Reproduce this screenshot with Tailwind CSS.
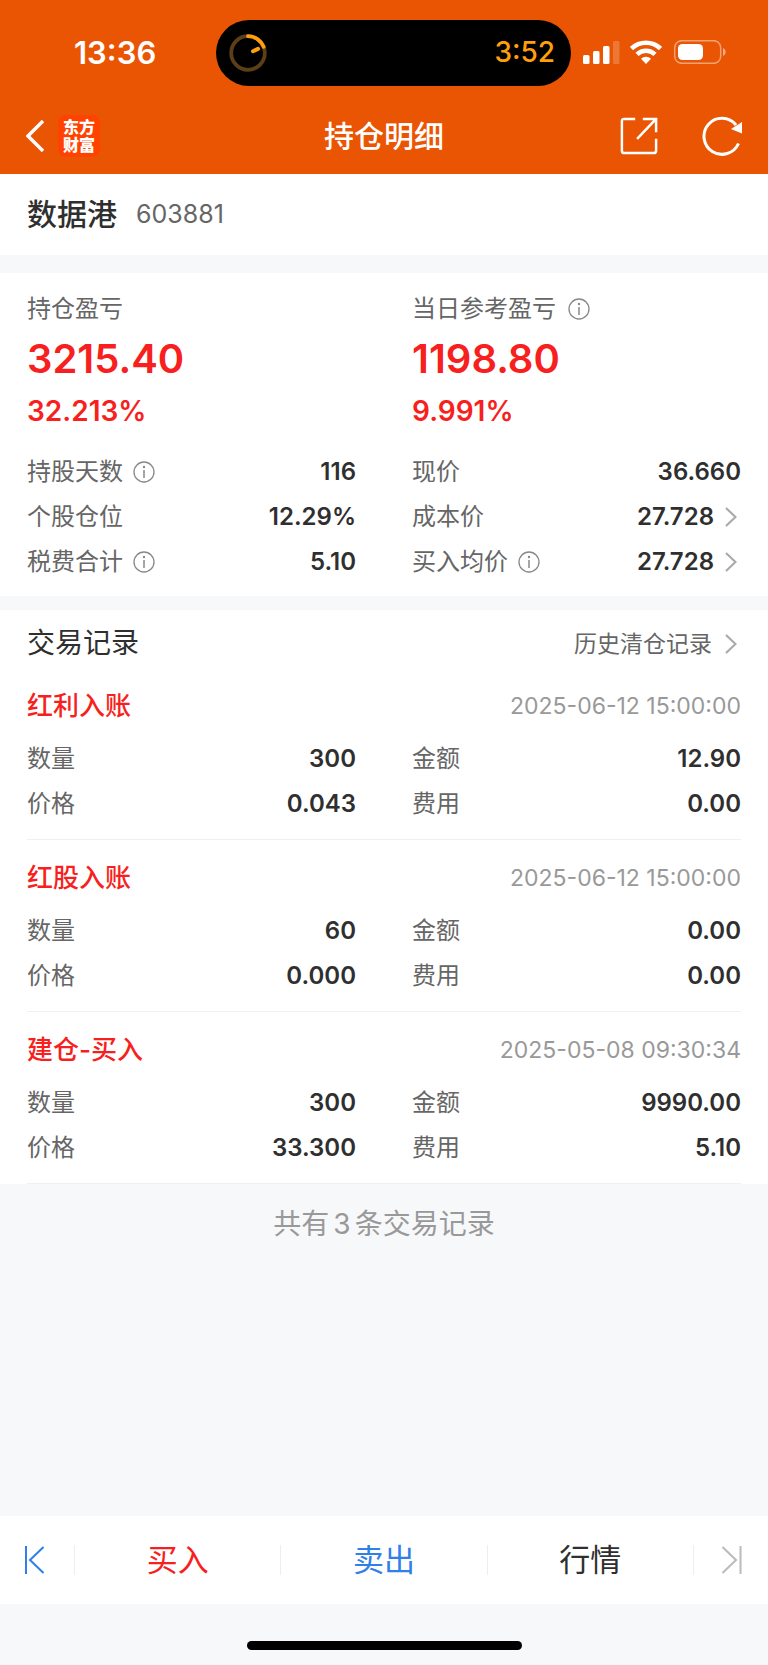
<!DOCTYPE html>
<html lang="zh-CN">
<head>
    <meta charset="UTF-8">
    <meta name="viewport" content="width=device-width, initial-scale=1.0">
    <title>持仓明细</title>
    <script src="https://cdn.jsdelivr.net/npm/@tailwindcss/browser@4"></script>
</head>
<body class="min-h-screen flex flex-col bg-[#f7f8fa] text-[#2f2f2f] text-2xl font-['Inter','Noto_Sans_CJK_SC',sans-serif]">
    <!-- shared icons -->
    <svg class="hidden">
        <symbol id="info" viewBox="0 0 22 22">
            <circle cx="11" cy="11" r="10" fill="none" stroke="currentColor" stroke-width="1.3"/>
            <path d="M11 9v8" stroke="currentColor" stroke-width="1.5"/>
            <circle cx="11" cy="6" r="1.2" fill="currentColor"/>
        </symbol>
        <symbol id="arrow" viewBox="0 0 12 20">
            <path d="M1 1l9.500 9L1 19" fill="none" stroke="currentColor" stroke-width="2.200"/>
        </symbol>
    </svg>

    <header class="bg-[#ea5504] text-white">
        <!-- status bar -->
        <div class="flex items-center h-[106px]">
            <div class="w-[216px] pl-[74px] text-[31px] font-semibold">13:36</div>
            <div class="flex-1 h-[66px] rounded-full bg-black flex items-center justify-between pl-[13px] pr-4">
                <svg class="size-[38px]" viewBox="0 0 38 38" fill="none" stroke-linecap="round">
                    <circle cx="19" cy="19" r="16.800" stroke="#5c3f17" stroke-width="3.800"/>
                    <path d="M19 2.200A16.800 16.800 0 0 1 34.600 12.800" stroke="#ff9f0a" stroke-width="3.800"/>
                    <path d="M24 17.200l5-2.300" stroke="#ff9f0a" stroke-width="4"/>
                </svg>
                <span class="text-[28px] font-medium text-[#ff9f0a]">3:52</span>
            </div>
            <div class="w-[197px] pl-3 pb-0.5 flex items-center gap-[10px]">
                <svg class="w-[37px] h-6" viewBox="0 0 37 24" fill="#fff">
                    <rect x="0" y="15" width="6.500" height="9" rx="1.500"/>
                    <rect x="10" y="11" width="6.500" height="13" rx="1.500"/>
                    <rect x="20" y="6" width="6.500" height="18" rx="1.500"/>
                    <rect x="30" y="1" width="6.500" height="23" rx="1.500" opacity=".2"/>
                </svg>
                <svg class="w-8 h-6" viewBox="0 0 32 24" fill="none" stroke="#fff" stroke-width="4.600">
                    <path d="M1.500 8.500a21 21 0 0 1 29 0"/>
                    <path d="M7 14.300a13 13 0 0 1 18 0"/>
                    <path d="M11 18.700a7.300 7.300 0 0 1 10 0L16 24z" fill="#fff" stroke="none"/>
                </svg>
                <svg class="w-[54px] h-6" viewBox="0 0 54 24" fill="none">
                    <rect x="2.700" y=".7" width="46" height="22.600" rx="7" stroke="#fff" stroke-opacity=".45" stroke-width="1.500"/>
                    <rect x="6" y="4" width="25" height="16" rx="4.500" fill="#fff"/>
                    <path d="M51 8c3.500 1.500 3.500 6.500 0 8z" fill="#fff" fill-opacity=".5"/>
                </svg>
            </div>
        </div>
        <!-- nav bar -->
        <div class="grid grid-cols-3 items-center h-[68px] px-[26px] pb-2">
            <div class="flex items-center gap-[14px]">
                <button aria-label="返回">
                    <svg class="w-[18px] h-8" viewBox="0 0 18 32" fill="none" stroke="#fff" stroke-width="3.400">
                        <path d="M17 1L2 16l15 15"/>
                    </svg>
                </button>
                <div class="size-[42px] rounded-lg bg-[#ff4200] flex items-center justify-center text-base leading-[18px] font-black text-center">东方<br>财富</div>
            </div>
            <h1 class="text-center text-[30px] leading-10 font-medium">持仓明细</h1>
            <div class="flex items-center justify-end gap-11">
                <button aria-label="分享">
                    <svg class="size-[38px]" viewBox="0 0 40 40" fill="none" stroke="#fff" stroke-width="2.600">
                        <path d="M16 2H4.500Q2 2 2 4.500v31Q2 38 4.500 38h31q2.500 0 2.500-2.500V23"/>
                        <path d="M24 2h14v14M38 2L18 23"/>
                    </svg>
                </button>
                <button aria-label="刷新">
                    <svg class="size-10" viewBox="0 0 40 40" fill="none" stroke="#fff" stroke-width="3">
                        <path d="M36.500 27.500A18 18 0 1 1 34 9"/>
                        <path d="M40 6v11.500L29 13z" fill="#fff" stroke="none"/>
                    </svg>
                </button>
            </div>
        </div>
    </header>

    <main>
        <section class="h-[81px] px-[27px] flex items-center gap-[19px] bg-white">
            <h2 class="text-[30px] font-medium">数据港</h2>
            <span class="text-[25px] text-[#666]">603881</span>
        </section>

        <!-- profit and position -->
        <section class="mt-[18px] px-[27px] pt-4 pb-3 bg-white">
            <div class="grid grid-cols-2 gap-x-14 text-[#f71f20] font-semibold">
                <div>
                    <h3 class="leading-10 font-normal text-[#666]">持仓盈亏</h3>
                    <p class="text-[40px] leading-[60px]">3215.40</p>
                    <p class="text-[28px] leading-11">32.213%</p>
                </div>
                <div>
                    <h3 class="flex items-center gap-3 leading-10 font-normal text-[#666]">当日参考盈亏<svg class="size-[22px] text-[#888]"><use href="#info"/></svg></h3>
                    <p class="text-[40px] leading-[60px]">1198.80</p>
                    <p class="text-[28px] leading-11">9.991%</p>
                </div>
            </div>
            <dl class="mt-4 grid grid-cols-2 gap-x-14 leading-[45px]">
                <div class="flex justify-between">
                    <dt class="flex items-center gap-[10px] text-[#666]">持股天数<svg class="size-[22px] text-[#888]"><use href="#info"/></svg></dt>
                    <dd class="font-semibold">116</dd>
                </div>
                <div class="flex justify-between">
                    <dt class="text-[#666]">现价</dt>
                    <dd class="font-semibold">36.660</dd>
                </div>
                <div class="flex justify-between">
                    <dt class="text-[#666]">个股仓位</dt>
                    <dd class="font-semibold">12.29%</dd>
                </div>
                <div class="flex justify-between">
                    <dt class="text-[#666]">成本价</dt>
                    <dd class="flex items-center gap-[11px] pr-1 font-semibold">27.728<svg class="w-3 h-5 text-[#aaa]"><use href="#arrow"/></svg></dd>
                </div>
                <div class="flex justify-between">
                    <dt class="flex items-center gap-[10px] text-[#666]">税费合计<svg class="size-[22px] text-[#888]"><use href="#info"/></svg></dt>
                    <dd class="font-semibold">5.10</dd>
                </div>
                <div class="flex justify-between">
                    <dt class="flex items-center gap-[10px] text-[#666]">买入均价<svg class="size-[22px] text-[#888]"><use href="#info"/></svg></dt>
                    <dd class="flex items-center gap-[11px] pr-1 font-semibold">27.728<svg class="w-3 h-5 text-[#aaa]"><use href="#arrow"/></svg></dd>
                </div>
            </dl>
        </section>

        <!-- trade records -->
        <section class="mt-[14px] px-[27px] pt-[10px] bg-white">
            <div class="h-12 flex items-center justify-between">
                <h2 class="text-[28px]">交易记录</h2>
                <a href="#" class="flex items-center gap-[13px] pr-1 text-[23px] text-[#666]">历史清仓记录<svg class="w-3 h-5 text-[#aaa]"><use href="#arrow"/></svg></a>
            </div>

            <article class="pt-[14px] pb-[13px] border-b border-[#f0f0f0]">
                <div class="h-12 mb-1.5 flex items-center justify-between">
                    <h3 class="text-[26px] font-medium text-[#f71f20]">红利入账</h3>
                    <time class="text-[23px] text-[#999]">2025-06-12 15:00:00</time>
                </div>
                <dl class="grid grid-cols-2 gap-x-14 leading-[45px]">
                    <div class="flex justify-between"><dt class="text-[#666]">数量</dt><dd class="font-semibold">300</dd></div>
                    <div class="flex justify-between"><dt class="text-[#666]">金额</dt><dd class="font-semibold">12.90</dd></div>
                    <div class="flex justify-between"><dt class="text-[#666]">价格</dt><dd class="font-semibold">0.043</dd></div>
                    <div class="flex justify-between"><dt class="text-[#666]">费用</dt><dd class="font-semibold">0.00</dd></div>
                </dl>
            </article>

            <article class="pt-[14px] pb-[13px] border-b border-[#f0f0f0]">
                <div class="h-12 mb-1.5 flex items-center justify-between">
                    <h3 class="text-[26px] font-medium text-[#f71f20]">红股入账</h3>
                    <time class="text-[23px] text-[#999]">2025-06-12 15:00:00</time>
                </div>
                <dl class="grid grid-cols-2 gap-x-14 leading-[45px]">
                    <div class="flex justify-between"><dt class="text-[#666]">数量</dt><dd class="font-semibold">60</dd></div>
                    <div class="flex justify-between"><dt class="text-[#666]">金额</dt><dd class="font-semibold">0.00</dd></div>
                    <div class="flex justify-between"><dt class="text-[#666]">价格</dt><dd class="font-semibold">0.000</dd></div>
                    <div class="flex justify-between"><dt class="text-[#666]">费用</dt><dd class="font-semibold">0.00</dd></div>
                </dl>
            </article>

            <article class="pt-[14px] pb-[13px] border-b border-[#f0f0f0]">
                <div class="h-12 mb-1.5 flex items-center justify-between">
                    <h3 class="text-[26px] font-medium text-[#f71f20]">建仓-买入</h3>
                    <time class="text-[23px] text-[#999]">2025-05-08 09:30:34</time>
                </div>
                <dl class="grid grid-cols-2 gap-x-14 leading-[45px]">
                    <div class="flex justify-between"><dt class="text-[#666]">数量</dt><dd class="font-semibold">300</dd></div>
                    <div class="flex justify-between"><dt class="text-[#666]">金额</dt><dd class="font-semibold">9990.00</dd></div>
                    <div class="flex justify-between"><dt class="text-[#666]">价格</dt><dd class="font-semibold">33.300</dd></div>
                    <div class="flex justify-between"><dt class="text-[#666]">费用</dt><dd class="font-semibold">5.10</dd></div>
                </dl>
            </article>
        </section>

        <p class="py-5 text-center text-[28px] leading-10 text-[#999]">共有<span class="mx-1">3</span>条交易记录</p>
    </main>

    <footer class="mt-auto">
        <nav class="flex items-center h-[88px] bg-white text-[31px] leading-10">
            <button class="w-[74px] pl-6" aria-label="上一个">
                <svg class="w-5 h-7" viewBox="0 0 20 28" fill="none" stroke="#2f80e8" stroke-width="2">
                    <path d="M2 0v28M19.500 1L6 14l13.500 13"/>
                </svg>
            </button>
            <button class="flex-1 h-[30px] flex items-center justify-center border-l border-[#eee] text-[#f71f20]">买入</button>
            <button class="flex-1 h-[30px] flex items-center justify-center border-l border-[#eee] text-[#2f80e8]">卖出</button>
            <button class="flex-1 h-[30px] flex items-center justify-center border-x border-[#eee]">行情</button>
            <button class="w-[74px] pl-7" aria-label="下一个">
                <svg class="w-5 h-7" viewBox="0 0 20 28" fill="none" stroke="#bbb" stroke-width="2">
                    <path d="M18.500 0v28M.5 1L14 14 .5 27"/>
                </svg>
            </button>
        </nav>
        <div class="h-[61px] pt-[37px]">
            <div class="w-[275px] h-[9px] mx-auto rounded-full bg-black"></div>
        </div>
    </footer>
</body>
</html>
